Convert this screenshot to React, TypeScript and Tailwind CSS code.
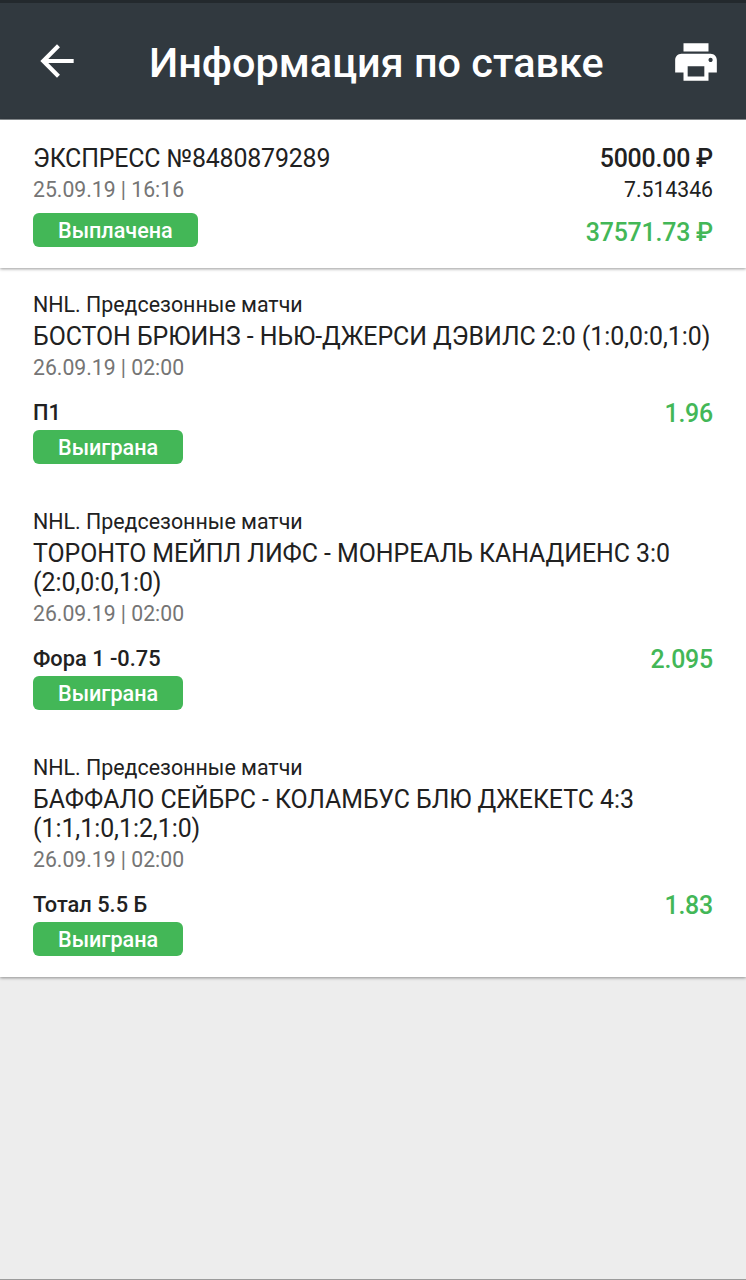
import React from 'react';
import { MdArrowBack, MdPrint } from 'react-icons/md';

interface BetEvent {
  league: string;
  match: string;
  date: string;
  outcome: string;
  odds: string;
}

const events: BetEvent[] = [
  {
    league: 'NHL. Предсезонные матчи',
    match: 'БОСТОН БРЮИНЗ - НЬЮ-ДЖЕРСИ ДЭВИЛС 2:0 (1:0,0:0,1:0)',
    date: '26.09.19 | 02:00',
    outcome: 'П1',
    odds: '1.96',
  },
  {
    league: 'NHL. Предсезонные матчи',
    match: 'ТОРОНТО МЕЙПЛ ЛИФС - МОНРЕАЛЬ КАНАДИЕНС 3:0 (2:0,0:0,1:0)',
    date: '26.09.19 | 02:00',
    outcome: 'Фора 1 -0.75',
    odds: '2.095',
  },
  {
    league: 'NHL. Предсезонные матчи',
    match: 'БАФФАЛО СЕЙБРС - КОЛАМБУС БЛЮ ДЖЕКЕТС 4:3 (1:1,1:0,1:2,1:0)',
    date: '26.09.19 | 02:00',
    outcome: 'Тотал 5.5 Б',
    odds: '1.83',
  },
];

const Badge: React.FC<{ children: React.ReactNode }> = ({ children }) => (
  <span className="block w-fit h-[34px] px-[25px] rounded-md bg-[#43b757] text-white text-[21.6px] leading-[35px] font-medium">
    {children}
  </span>
);

const Header: React.FC = () => (
  <header className="flex items-center h-[120px] pl-8 pr-[25px] bg-[#31393f] border-t-[3px] border-b border-t-[#23292d] border-b-[#8b9093] text-white">
    <button className="shrink-0">
      <MdArrowBack size={50} />
    </button>
    <h1 className="flex-1 pt-1 pl-[67px] text-[41.4px] leading-[50px] font-medium whitespace-nowrap">
      Информация по ставке
    </h1>
    <button className="shrink-0 pt-px">
      <MdPrint size={50} />
    </button>
  </header>
);

const Summary: React.FC = () => (
  <section className="relative flex justify-between h-[148px] pt-6 px-[33px] bg-white shadow-[0_1px_3px_rgba(0,0,0,0.4)]">
    <div>
      <p className="text-[24.9px] leading-[29px] tracking-[-0.15px]">ЭКСПРЕСС №8480879289</p>
      <p className="mt-1 text-[21.2px] leading-[26px] text-[#757575]">25.09.19 | 16:16</p>
      <div className="mt-[10px]">
        <Badge>Выплачена</Badge>
      </div>
    </div>
    <div className="text-right">
      <p className="text-[24.9px] leading-[29px] tracking-[-0.2px] font-medium">5000.00 ₽</p>
      <p className="mt-1 text-[21.2px] leading-[26px]">7.514346</p>
      <p className="mt-[15px] text-[24.9px] leading-[29px] tracking-[-0.2px] font-medium text-[#43b757]">37571.73 ₽</p>
    </div>
  </section>
);

const EventCard: React.FC<{ event: BetEvent }> = ({ event }) => (
  <li>
    <p className="pt-px text-[21.4px] leading-[26px]">{event.league}</p>
    <p className="mt-1 -mr-5 pr-4 text-[24.9px] leading-[29px] tracking-[-0.04px]">{event.match}</p>
    <p className="mt-1 text-[21.2px] leading-[26px] text-[#757575]">{event.date}</p>
    <div className="mt-[19px] flex items-center justify-between">
      <span className="text-[21.8px] leading-[26px] font-medium">{event.outcome}</span>
      <span className="pt-px -mb-px text-[24.9px] leading-[26px] tracking-[-0.2px] font-medium text-[#43b757]">{event.odds}</span>
    </div>
    <div className="mt-1">
      <Badge>Выиграна</Badge>
    </div>
  </li>
);

const App: React.FC = () => {
  return (
    <div className="flex flex-col h-[1280px] bg-[#ededed] border-b border-[#9b9b9b] font-['Roboto',sans-serif] text-[#212121]">
      <Header />
      <Summary />
      <ul className="flex flex-col gap-[44px] h-[709px] pt-[23px] px-[33px] bg-white shadow-[0_1px_3px_rgba(0,0,0,0.4)]">
        {events.map((event) => (
          <EventCard key={event.outcome} event={event} />
        ))}
      </ul>
    </div>
  );
};

export default App;
